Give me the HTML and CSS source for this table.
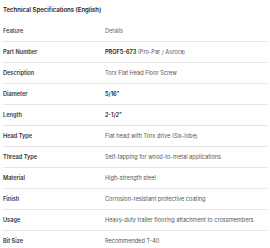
FILE: index.html
```html
<!DOCTYPE html>
<html lang="en">
<head>
  <meta charset="UTF-8" />
  <title>Technical Specifications</title>
  <link rel="stylesheet" href="styles.css">
</head>
<body>
  <div class="spec">
    <h2 class="spec-title">Technical Specifications (English)</h2>
    <table class="spec-table">
      <thead>
        <tr>
          <th>Feature</th>
          <th class="head-detail">Details</th>
        </tr>
      </thead>
      <tbody>
        <tr><td class="label">Part Number</td><td><strong>PROF5-673</strong> (Pro-Par / Aurora)</td></tr>
        <tr><td class="label">Description</td><td>Torx Flat Head Floor Screw</td></tr>
        <tr><td class="label">Diameter</td><td><strong>5/16"</strong></td></tr>
        <tr><td class="label">Length</td><td><strong>2-1/2"</strong></td></tr>
        <tr><td class="label">Head Type</td><td>Flat head with Torx drive (Six-lobe)</td></tr>
        <tr><td class="label">Thread Type</td><td>Self-tapping for wood-to-metal applications</td></tr>
        <tr><td class="label">Material</td><td>High-strength steel</td></tr>
        <tr><td class="label">Finish</td><td>Corrosion-resistant protective coating</td></tr>
        <tr><td class="label">Usage</td><td>Heavy-duty trailer flooring attachment to crossmembers</td></tr>
        <tr><td class="label">Bit Size</td><td>Recommended T-40</td></tr>
      </tbody>
    </table>
  </div>
</body>
</html>
```

FILE: styles.css
```css
html, body {
  margin: 0;
  padding: 0;
  font-family: Inter, "Liberation Sans", sans-serif;
  background-color: #ffffff;
}
.spec {
  padding: 5px 3px 0 3px;
}
.spec-title {
  font-size: 6px;
  font-weight: 600;
  color: #222;
  margin: 0 0 6px 0;
  line-height: 10px;
}
.spec-table {
  width: 100%;
  border-collapse: collapse;
  font-size: 5.6px;
}
.spec-table th,
.spec-table td {
  text-align: left;
  height: 20px;
  padding: 0;
  border-bottom: 1px solid #e4e4e4;
  vertical-align: middle;
}
.spec-table th {
  font-weight: 500;
  color: #333;
}
.spec-table th:first-child,
.spec-table td.label {
  width: 102px;
}
.spec-table th.head-detail {
  font-weight: 400;
  color: #666;
}
.spec-table td {
  color: #555;
}
.spec-table td.label {
  font-weight: 600;
  color: #333;
}
.spec-table td strong {
  font-weight: 600;
  color: #222;
}
.spec-table tr:last-child td {
  border-bottom: none;
}
```
